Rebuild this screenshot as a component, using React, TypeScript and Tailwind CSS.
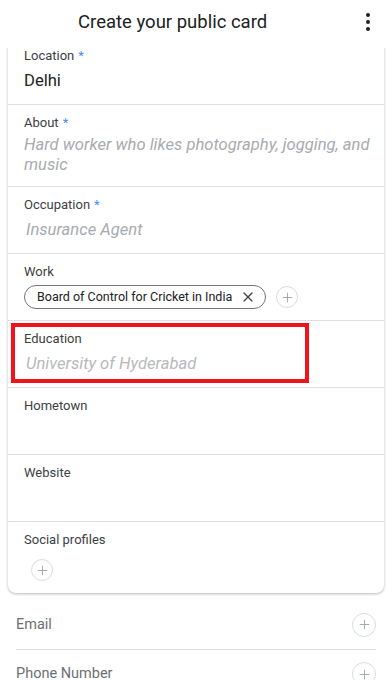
import { X, Plus } from "lucide-react";

const font = { fontFamily: 'Roboto, "Noto Sans", Arial, sans-serif' };

function Label({ text, required }: { text: string; required?: boolean }) {
  return (
    <div className="text-[13px] leading-4 text-[#3c4043]">
      {text}
      {required && <span className="ml-1 text-[#4c8bf5]">*</span>}
    </div>
  );
}

function PlusCircle({ size = "w-[22px] h-[22px]" }: { size?: string }) {
  return (
    <div className={`${size} rounded-full border border-[#dadce0] flex items-center justify-center text-[#9aa0a6]`}>
      <Plus className="w-[15px] h-[15px]" strokeWidth={1.4} />
    </div>
  );
}

function Row({ children, last }: { children: React.ReactNode; last?: boolean }) {
  return (
    <div className={`relative px-4 pt-[10px] ${last ? "pb-3" : "pb-[11px] border-b border-[#e0e0e0]"}`}>
      {children}
    </div>
  );
}

export default function App() {
  return (
    <div className="w-[392px] h-[680px] bg-white overflow-hidden flex flex-col" style={font}>
      {/* Top bar */}
      <header className="relative z-10 h-12 shrink-0 bg-white flex items-center">
        <h1 className="pl-[78px] text-[18.5px] text-[#202124] leading-6 -mt-1">Create your public card</h1>
        <div className="ml-auto mr-[22px] flex flex-col gap-[3px] -mt-1">
          <span className="w-1 h-1 rounded-full bg-[#202124]" />
          <span className="w-1 h-1 rounded-full bg-[#202124]" />
          <span className="w-1 h-1 rounded-full bg-[#202124]" />
        </div>
      </header>

      <div className="flex-1 overflow-hidden">
        {/* Card */}
        <div className="mx-2 -mt-[10px] bg-white rounded-b-lg shadow-[0_1px_3px_rgba(0,0,0,0.28)]">
          <Row>
            <Label text="Location" required />
            <div className="mt-[5px] text-[16.6px] leading-6 text-[#202124]">Delhi</div>
          </Row>
          <Row>
            <Label text="About" required />
            <div className="mt-1 -mr-3 text-[16.6px] leading-5 italic text-[#a8abaf]">
              Hard worker who likes photography, jogging, and music
            </div>
          </Row>
          <Row>
            <Label text="Occupation" required />
            <div className="mt-[5px] text-[16.6px] leading-6 italic text-[#a8abaf] pl-[2px]">Insurance Agent</div>
          </Row>
          <Row>
            <Label text="Work" />
            <div className="mt-[5px] flex items-center gap-[10px]">
              <div className="h-6 flex items-center rounded-full border border-[#757575] pl-3 pr-[9px] text-[12.5px] text-[#202124]">
                Board of Control for Cricket in India
                <X className="ml-[8px] w-4 h-4 text-[#3c4043]" strokeWidth={1.8} />
              </div>
              <PlusCircle />
            </div>
          </Row>
          <Row>
            <div className="absolute left-[3px] top-[2px] w-[298px] h-[60px] border-4 border-[#f2121c] pointer-events-none" />
            <Label text="Education" />
            <div className="mt-[5px] text-[16.6px] leading-6 italic text-[#b6b9bc] pl-[2px]">University of Hyderabad</div>
          </Row>
          <Row>
            <Label text="Hometown" />
            <div className="mt-[5px] h-6" />
          </Row>
          <Row>
            <Label text="Website" />
            <div className="mt-[5px] h-6" />
          </Row>
          <Row last>
            <Label text="Social profiles" />
            <div className="mt-[11px] ml-[7px]">
              <PlusCircle />
            </div>
          </Row>
        </div>

        {/* Contact rows */}
        <div className="px-4 pt-[7px]">
          <div className="h-[50px] flex items-center justify-between border-b border-[#e0e0e0]">
            <span className="text-[14.5px] text-[#6b6f73]">Email</span>
            <PlusCircle size="w-6 h-6" />
          </div>
          <div className="h-[48px] flex items-center justify-between">
            <span className="text-[14.5px] text-[#6b6f73]">Phone Number</span>
            <PlusCircle size="w-6 h-6" />
          </div>
        </div>
      </div>
    </div>
  );
}
